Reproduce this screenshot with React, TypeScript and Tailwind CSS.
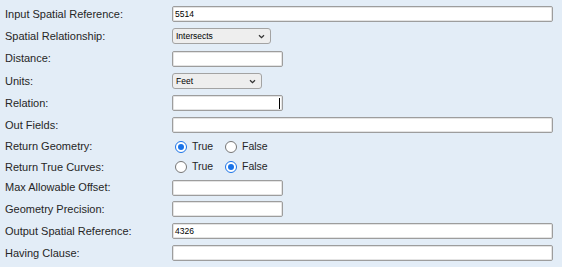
import { ReactNode } from "react";

const labelFont = { fontFamily: '"Liberation Sans", Arial, sans-serif' };

function Row({ label, h, children }: { label: string; h: string; children: ReactNode }) {
  return (
    <div className={`flex items-center ${h}`}>
      <div className="w-[172px] shrink-0 pl-[5px] text-[11px] text-[#262626]">{label}</div>
      <div className="flex items-center">{children}</div>
    </div>
  );
}

function TextBox({ wide, value, caret }: { wide?: boolean; value?: string; caret?: boolean }) {
  return (
    <div
      className={`relative flex h-[16px] items-center rounded-[2px] border border-[#9d9d9d] bg-white pl-[2px] text-[8.5px] text-black shadow-[inset_0_0_0_1px_#e4e4e4] ${
        wide ? "w-[381px]" : "w-[111px]"
      }`}
    >
      {value}
      {caret && <span className="absolute right-[2px] top-[2px] h-[11px] w-px bg-black" />}
    </div>
  );
}

function Select({ value, w }: { value: string; w: string }) {
  return (
    <div
      className={`flex h-[16px] items-center justify-between rounded-[3px] border border-[#a3a3a3] bg-[#eeeeee] pl-[3px] pr-[5px] text-[8.5px] text-black ${w}`}
    >
      <span>{value}</span>
      <svg width="7" height="5" viewBox="0 0 7 5" fill="none">
        <path d="M1 1.2 L3.5 3.6 L6 1.2" stroke="#333" strokeWidth="1.3" />
      </svg>
    </div>
  );
}

function Radio({ checked }: { checked?: boolean }) {
  return (
    <span
      className={`flex h-[12px] w-[12px] items-center justify-center rounded-full border ${
        checked ? "border-[#1a73e8] bg-white" : "border-[#767676] bg-white"
      }`}
    >
      {checked && <span className="h-[6px] w-[6px] rounded-full bg-[#1a73e8]" />}
    </span>
  );
}

function RadioPair({ first }: { first: boolean }) {
  return (
    <div className="flex items-center pl-[3px] text-[10.5px] text-[#262626]">
      <Radio checked={first} />
      <span className="ml-[5px] w-[33px]">True</span>
      <Radio checked={!first} />
      <span className="ml-[5px]">False</span>
    </div>
  );
}

export default function App() {
  return (
    <div className="h-[267px] w-[562px] overflow-hidden bg-[#e3edf7] pt-[3px]" style={labelFont}>
      <Row label="Input Spatial Reference:" h="h-[22px]">
        <TextBox wide value="5514" />
      </Row>
      <Row label="Spatial Relationship:" h="h-[22px]">
        <Select value="Intersects" w="w-[99px]" />
      </Row>
      <Row label="Distance:" h="h-[23px]">
        <TextBox />
      </Row>
      <Row label="Units:" h="h-[22px]">
        <Select value="Feet" w="w-[90px]" />
      </Row>
      <Row label="Relation:" h="h-[22px]">
        <TextBox caret />
      </Row>
      <Row label="Out Fields:" h="h-[22px]">
        <TextBox wide />
      </Row>
      <Row label="Return Geometry:" h="h-[21px]">
        <RadioPair first />
      </Row>
      <Row label="Return True Curves:" h="h-[20px]">
        <RadioPair first={false} />
      </Row>
      <Row label="Max Allowable Offset:" h="h-[21px]">
        <TextBox />
      </Row>
      <Row label="Geometry Precision:" h="h-[22px]">
        <TextBox />
      </Row>
      <Row label="Output Spatial Reference:" h="h-[22px]">
        <TextBox wide value="4326" />
      </Row>
      <Row label="Having Clause:" h="h-[22px]">
        <TextBox wide />
      </Row>
    </div>
  );
}
